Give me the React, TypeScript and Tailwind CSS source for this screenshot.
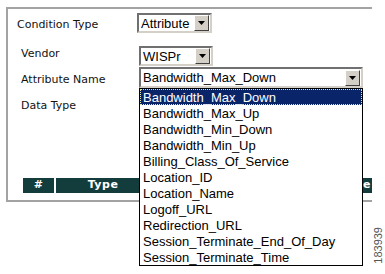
const items = [
  "Bandwidth_Max_Down",
  "Bandwidth_Max_Up",
  "Bandwidth_Min_Down",
  "Bandwidth_Min_Up",
  "Billing_Class_Of_Service",
  "Location_ID",
  "Location_Name",
  "Logoff_URL",
  "Redirection_URL",
  "Session_Terminate_End_Of_Day",
  "Session_Terminate_Time",
];

function Arrow() {
  return (
    <div className="flex h-[16px] w-[15px] shrink-0 items-center justify-center border border-t-white border-l-white border-b-[#404040] border-r-[#404040] bg-[#d4d0c8]">
      <svg width="7" height="4" viewBox="0 0 7 4">
        <path d="M0 0h7L3.5 4z" fill="#000" />
      </svg>
    </div>
  );
}

function Select({ value, className }: { value: string; className: string }) {
  return (
    <div
      className={
        "flex items-center border-2 border-t-[#707070] border-l-[#707070] border-b-[#d4d0c8] border-r-[#d4d0c8] bg-white pr-px " +
        className
      }
    >
      <span className="flex-1 pl-[2px] font-['Liberation_Sans',Arial,sans-serif] text-[13px] leading-none text-black">
        {value}
      </span>
      <Arrow />
    </div>
  );
}

const label = "font-['DejaVu_Sans',Verdana,sans-serif] text-[11px] leading-[13px] text-[#111]";

export default function App() {
  return (
    <div className="relative h-[274px] w-[385px] overflow-hidden bg-white">
      <div className="ml-[6px] mt-[7px] h-[195px] w-[366px] border-y-2 border-l-2 border-[#a3a3a3] pt-[4px]">
        <div className="flex h-[20px] items-start">
          <div className={"ml-[9px] mt-[5px] w-[120px] " + label}>Condition Type</div>
          <Select value="Attribute" className="h-[20px] w-[75px]" />
        </div>
        <div className="mt-[13px] flex h-[20px] items-start">
          <div className={"ml-[13px] mt-[1px] w-[118px] " + label}>Vendor</div>
          <Select value="WISPr" className="h-[20px] w-[74px]" />
        </div>
        <div className="mt-[1px] flex h-[21px] items-start">
          <div className={"ml-[13px] mt-[6px] w-[118px] " + label}>Attribute Name</div>
          <Select value="Bandwidth_Max_Down" className="h-[21px] w-[224px]" />
        </div>
        <div className={"ml-[13px] mt-[11px] " + label}>Data Type</div>
        <div className="ml-[15px] mt-[66px] flex h-[15px] gap-[2px] font-['DejaVu_Sans',Verdana,sans-serif] text-[11px] font-bold tracking-[0.5px] text-white">
          <div className="flex w-[31px] items-center justify-center bg-[#133c3c]">#</div>
          <div className="flex w-[94px] items-center justify-center bg-[#133c3c]">Type</div>
          <div className="flex flex-1 items-center justify-end overflow-hidden bg-[#133c3c] pr-px">Value</div>
        </div>
      </div>

      <div className="absolute left-[139px] top-[88px] w-[224px] border border-black bg-white font-['Liberation_Sans',Arial,sans-serif] text-[13px] text-black">
        {items.map((it, i) => (
          <div
            key={it}
            className={
              "flex h-[16px] items-center pl-[3px] pt-px leading-none " +
              (i === 0 ? "bg-[#0a246a] text-white outline-1 outline-dotted -outline-offset-1 outline-[#e8e8a0]" : "")
            }
          >
            {it}
          </div>
        ))}
      </div>

      <div className="absolute left-[373px] top-[223px] flex h-[45px] w-[10px] items-center justify-center">
        <span className="rotate-180 font-['Liberation_Sans',Arial,sans-serif] text-[11px] leading-none text-[#555] [writing-mode:vertical-rl]">
          183939
        </span>
      </div>
    </div>
  );
}
